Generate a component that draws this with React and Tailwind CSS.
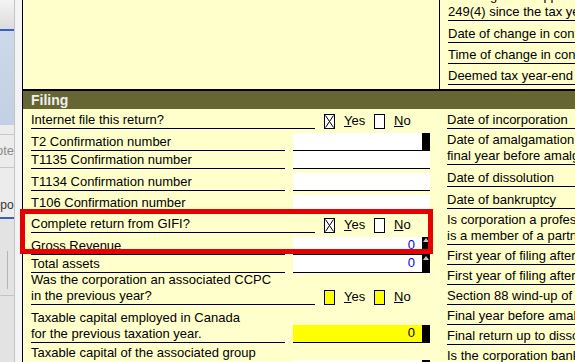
import React from 'react';

const Box = ({ checked, yellow }) => (
  <span className={`w-[11px] h-[15px] border border-black shrink-0 flex ${yellow ? 'bg-[#ffff00]' : 'bg-white'}`}>
    {checked && (
      <svg width="9" height="13" viewBox="0 0 9 13">
        <path d="M0.5 0.5L8.5 12.5M8.5 0.5L0.5 12.5" stroke="#000" strokeWidth="1" fill="none" />
      </svg>
    )}
  </span>
);

const YesNo = ({ yes, yellow }) => (
  <div className="flex items-end">
    <div className="ml-[9px]"><Box checked={yes} yellow={yellow} /></div>
    <span className="ml-[9px] w-[30px]"><span className="underline">Y</span>es</span>
    <Box yellow={yellow} />
    <span className="ml-[9px]"><span className="underline">N</span>o</span>
  </div>
);

const Spin = ({ arrow }) => (
  <div className="w-[8px] shrink-0 bg-black flex justify-center items-start pt-[1px]">
    {arrow && (
      <svg width="6" height="4" viewBox="0 0 6 4">
        <path d="M3 0L6 4H0Z" fill="#c4c4c4" />
      </svg>
    )}
  </div>
);

const Field = ({ value, yellow, block, arrow, blue, h = 'h-[18px]' }) => (
  <div className={`ml-[8px] w-[137px] shrink-0 ${h} border-b border-black flex ${yellow ? 'bg-[#ffff00]' : 'bg-white'}`}>
    <div className={`flex-1 text-right pr-[7px] ${blue ? 'text-[#0000ff]' : 'text-black'}`}>{value}</div>
    {block && <Spin arrow={arrow} />}
  </div>
);

const Row = ({ h, lw = 'w-[254px]', children, lines }) => (
  <div className={`flex items-end shrink-0 ${h}`}>
    <div className={`ml-[8px] ${lw} shrink-0 border-b border-black whitespace-nowrap`}>
      {lines.map((l) => <div key={l}>{l}</div>)}
    </div>
    {children}
  </div>
);

const RRow = ({ h, lines }) => (
  <div className={`flex items-end shrink-0 ${h}`}>
    <div className="ml-[8px] flex-1 border-b border-black whitespace-nowrap">
      {lines.map((l) => <div key={l}>{l}</div>)}
    </div>
  </div>
);

const Sidebar = () => (
  <div className="w-[22px] shrink-0 flex">
    <div className="w-[15px] flex flex-col bg-[#e3e3e3] border-r border-[#c4c4c4] overflow-hidden text-[12px]">
      <div className="h-[29px] shrink-0 bg-gradient-to-b from-[#f4f4f4] to-[#dcdcdc]" />
      <div className="h-[2px] shrink-0 bg-[#3b5ec6]" />
      <div className="h-[94px] shrink-0 bg-gradient-to-b from-[#cdd9ea] to-[#c2d0e3]" />
      <div className="h-[10px] shrink-0 bg-[#ececec] border-b border-[#c8c8c8]" />
      <div className="h-[33px] shrink-0 flex items-center justify-end overflow-hidden border-b border-[#c8c8c8] bg-[#ececec] text-[13px]">
        <span className="whitespace-nowrap text-[#8c8c8c]">Note</span>
      </div>
      <div className="h-[49px] shrink-0 flex items-end overflow-hidden bg-[#ececec] pb-[4px]">
        <span className="whitespace-nowrap text-[#333] ml-[-15px]">Report</span>
      </div>
      <div className="h-[2px] shrink-0 bg-[#3b5ec6]" />
      <div className="h-[32px] shrink-0" />
      <div className="h-[38px] shrink-0 ml-[7px] border-l border-[#b4b4b4]" />
      <div className="h-[7px] shrink-0 border-b border-[#c4c4c4]" />
    </div>
    <div className="w-[7px] bg-[#f3f3f3]" />
  </div>
);

export default function App() {
  return (
    <div className="relative w-[575px] h-[362px] overflow-hidden flex bg-[#ffffcc] font-['Liberation_Sans',Arial,sans-serif] text-[13px] leading-[16px] text-black">
      <Sidebar />
      <div className="flex-1 flex flex-col border-l border-black min-w-0">
        <div className="h-[89px] shrink-0 flex">
          <div className="w-[416px] shrink-0" />
          <div className="flex-1 flex flex-col border-l border-black">
            <RRow h="h-[21px]" lines={['resulting in the application of subsection', '249(4) since the tax year-end']} />
            <RRow h="h-[22px]" lines={['Date of change in control']} />
            <RRow h="h-[21px]" lines={['Time of change in control']} />
            <RRow h="h-[21px]" lines={['Deemed tax year-end']} />
          </div>
        </div>
        <div className="h-[2px] shrink-0 bg-black" />
        <div className="h-[18px] shrink-0 bg-[#666633] pl-[8px] text-[14px] leading-[18px] font-bold text-[#efefef]">
          Filing
        </div>
        <div className="flex">
          <div className="w-[416px] shrink-0 flex flex-col">
            <Row h="h-[20px]" lw="w-[284px]" lines={['Internet file this return?']}>
              <YesNo yes />
            </Row>
            <Row h="h-[22px]" lines={['T2 Confirmation number']}>
              <Field block />
            </Row>
            <Row h="h-[18px]" lines={['T1135 Confirmation number']}>
              <Field />
            </Row>
            <Row h="h-[22px]" lines={['T1134 Confirmation number']}>
              <Field />
            </Row>
            <Row h="h-[21px]" lines={['T106 Confirmation number']}>
              <Field h="h-[17px]" />
            </Row>
            <Row h="h-[21px]" lw="w-[284px]" lines={['Complete return from GIFI?']}>
              <YesNo yes />
            </Row>
            <Row h="h-[22px]" lines={['Gross Revenue']}>
              <Field value="0" blue block arrow />
            </Row>
            <Row h="h-[18px]" lines={['Total assets']}>
              <Field value="0" blue block arrow />
            </Row>
            <Row h="h-[32px]" lw="w-[284px]" lines={['Was the corporation an associated CCPC', 'in the previous year?']}>
              <YesNo yellow />
            </Row>
            <Row h="h-[38px]" lines={['Taxable capital employed in Canada', 'for the previous taxation year.']}>
              <Field value="0" yellow block />
            </Row>
            <Row h="h-[35px]" lines={['Taxable capital of the associated group', 'in Canada for the previous taxation year.']}>
              <Field block />
            </Row>
          </div>
          <div className="flex-1 flex flex-col">
            <RRow h="h-[20px]" lines={['Date of incorporation']} />
            <RRow h="h-[36px]" lines={['Date of amalgamation', 'final year before amalgamation']} />
            <RRow h="h-[22px]" lines={['Date of dissolution']} />
            <RRow h="h-[22px]" lines={['Date of bankruptcy']} />
            <RRow h="h-[36px]" lines={['Is corporation a professional corporation that', 'is a member of a partnership?']} />
            <RRow h="h-[20px]" lines={['First year of filing after incorporation?']} />
            <RRow h="h-[20px]" lines={['First year of filing after amalgamation?']} />
            <RRow h="h-[20px]" lines={['Section 88 wind-up of a subsidiary?']} />
            <RRow h="h-[20px]" lines={['Final year before amalgamation?']} />
            <RRow h="h-[20px]" lines={['Final return up to dissolution?']} />
            <RRow h="h-[20px]" lines={['Is the corporation bankrupt?']} />
          </div>
        </div>
      </div>
      <div className="absolute left-[20px] top-[209px] w-[413px] h-[45px] border-[5px] border-[#e60000] pointer-events-none" />
    </div>
  );
}
